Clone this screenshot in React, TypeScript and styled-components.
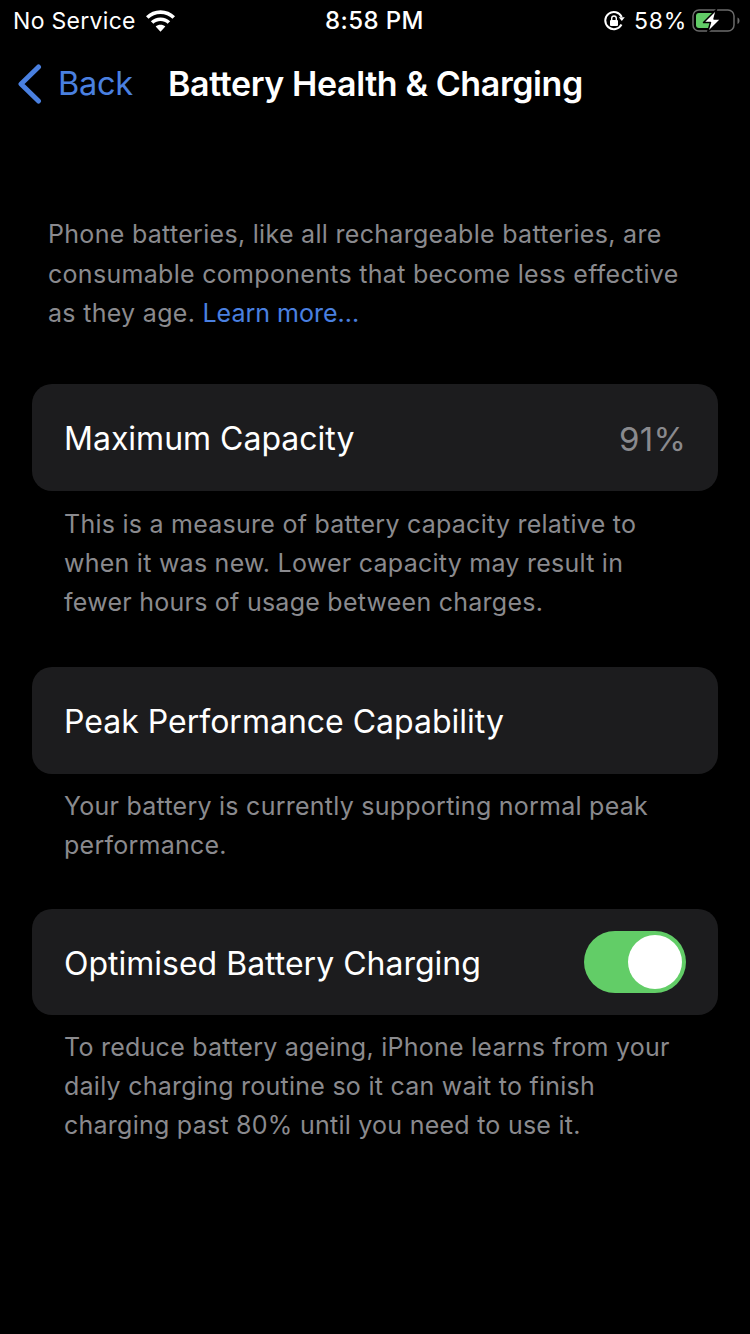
import styled, { createGlobalStyle } from "styled-components"

const GlobalStyle = createGlobalStyle`
html, body {
  margin: 0;
  padding: 0;
  background: #000;
}
`

const App = () => {
  return (
    <>
      <GlobalStyle />
      <Screen>
        <StatusBar>
          <StatusSide>
            <StatusText>No Service</StatusText>
            <WifiIcon />
          </StatusSide>
          <Clock>8:58 PM</Clock>
          <StatusRight>
            <RotationIcon />
            <BatteryPercent>58%</BatteryPercent>
            <BatteryIcon />
          </StatusRight>
        </StatusBar>

        <NavBar>
          <BackLink>
            <ChevronIcon />
            Back
          </BackLink>
          <Title>Battery Health &amp; Charging</Title>
        </NavBar>

        <Intro>
          Phone batteries, like all rechargeable batteries, are
          <br />
          consumable components that become less effective
          <br />
          as they age. <Learn>Learn more...</Learn>
        </Intro>

        <Card>
          <CardLabel>Maximum Capacity</CardLabel>
          <CardValue>91%</CardValue>
        </Card>
        <Footer $before={14} $after={45}>
          This is a measure of battery capacity relative to
          <br />
          when it was new. Lower capacity may result in
          <br />
          fewer hours of usage between charges.
        </Footer>

        <Card>
          <CardLabel>Peak Performance Capability</CardLabel>
        </Card>
        <Footer $before={13} $after={44}>
          Your battery is currently supporting normal peak
          <br />
          performance.
        </Footer>

        <Card $height={106}>
          <CardLabel>Optimised Battery Charging</CardLabel>
          <Toggle>
            <Knob />
          </Toggle>
        </Card>
        <Footer $before={13} $after={44}>
          To reduce battery ageing, iPhone learns from your
          <br />
          daily charging routine so it can wait to finish
          <br />
          charging past 80% until you need to use it.
        </Footer>
      </Screen>
    </>
  )
}

export default App

const WifiIcon = () => (
  <svg width="29" height="22" viewBox="1.800 .8 26.400 19.400">
    <path d="M15 4.200c4.200 0 8 1.600 10.900 4.300l2.300-2.400C24.700 2.800 20.100.8 15 .8S5.300 2.800 1.800 6.100l2.300 2.400C7 5.800 10.800 4.200 15 4.200z" fill="#fff" />
    <path d="M15 10.600c2.500 0 4.700.9 6.500 2.500l2.300-2.400C21.500 8.500 18.400 7.200 15 7.200s-6.500 1.300-8.800 3.500l2.300 2.400c1.800-1.600 4-2.500 6.500-2.500z" fill="#fff" />
    <path d="M15 13.800c-1.700 0-3.200.6-4.400 1.700L15 20.200l4.400-4.700c-1.200-1.100-2.700-1.700-4.400-1.700z" fill="#fff" />
  </svg>
)

const ChevronIcon = () => (
  <svg width="26" height="40" viewBox="0 0 26 40">
    <path d="M20.500 3L3 20l17.500 17" fill="none" stroke="#4a80e0" strokeWidth="5" strokeLinecap="round" strokeLinejoin="round" />
  </svg>
)

const RotationIcon = () => (
  <svg width="22" height="22" viewBox="0 0 22 22">
    <path d="M18.500 14.500A8.600 8.600 0 1 1 18.700 7" fill="none" stroke="#fff" strokeWidth="2" />
    <path d="M15.800 7.200h6l-3 3.800z" fill="#fff" />
    <rect x="7" y="10" width="8" height="6" rx="1" fill="#fff" />
    <path d="M8.700 10V8.300a2.300 2.300 0 0 1 4.600 0V10" fill="none" stroke="#fff" strokeWidth="1.400" />
  </svg>
)

const BatteryIcon = () => (
  <svg width="49" height="26" viewBox="0 0 49 26">
    <rect x="1" y="2" width="41" height="21" rx="6" fill="none" stroke="#6b6b6b" strokeWidth="1.500" />
    <path d="M4 8a3 3 0 0 1 3-3h14v15H7a3 3 0 0 1-3-3z" fill="#62cd67" />
    <path d="M45.500 9.500c1.300.5 2 1.700 2 3.200s-.7 2.700-2 3.200z" fill="#6b6b6b" />
    <path d="M24.500 1.500L11.500 14.500h7L15.500 24.500l13.500-13.500h-7z" fill="#fff" stroke="#000" strokeWidth="1.500" strokeLinejoin="round" />
  </svg>
)

const Screen = styled.div`
width: 750px;
min-height: 1334px;
background: #000;
color: #fff;
font-family: Inter, "Liberation Sans", sans-serif;
overflow: hidden;
`

const StatusBar = styled.div`
height: 41px;
padding: 0 9px 0 13px;
display: grid;
grid-template-columns: 1fr auto 1fr;
align-items: center;
`

const StatusSide = styled.div`
display: flex;
align-items: center;
gap: 10px;
`

const StatusRight = styled(StatusSide)`
justify-content: flex-end;
gap: 7px;
`

const StatusText = styled.span`
font-size: 23px;
letter-spacing: 0.3px;
`

const BatteryPercent = styled(StatusText)`
margin: 0 -2px 0 2px;
letter-spacing: 0.7px;
`

const Clock = styled.span`
margin-right: 5px;
font-size: 24px;
font-weight: 500;
letter-spacing: 0.4px;
`

const NavBar = styled.div`
height: 88px;
padding: 0 0 3px 18px;
box-sizing: border-box;
display: flex;
align-items: center;
`

const BackLink = styled.div`
display: flex;
align-items: center;
gap: 14px;
width: 150px;
color: #4a80e0;
font-size: 32.500px;
letter-spacing: -0.3px;
`

const Title = styled.h1`
margin: 0;
font-size: 34px;
font-weight: 600;
letter-spacing: -0.4px;
`

const Intro = styled.p`
margin: 0 0 50px;
padding: 86px 48px 0;
font-size: 25px;
line-height: 39.500px;
letter-spacing: 0.3px;
color: #8a8a8e;
`

const Learn = styled.span`
color: #4a80e0;
letter-spacing: 0;
`

const Card = styled.div<{ $height?: number }>`
height: ${(p) => p.$height ?? 107}px;
margin: 0 32px;
padding: 0 32px;
box-sizing: border-box;
display: flex;
align-items: center;
justify-content: space-between;
background: #1c1c1e;
border-radius: 20px;
`

const CardLabel = styled.span`
padding-top: 3px;
font-size: 32px;
`

const CardValue = styled(CardLabel)`
font-size: 33px;
letter-spacing: 0.2px;
color: #8a8a8e;
`

const Footer = styled.p<{ $before: number; $after: number }>`
margin: 0 0 ${(p) => p.$after}px;
padding: ${(p) => p.$before}px 64px 0;
font-size: 25px;
line-height: 39px;
letter-spacing: 0.25px;
color: #8a8a8e;
`

const Toggle = styled.div`
width: 102px;
height: 62px;
padding: 4px;
box-sizing: border-box;
display: flex;
justify-content: flex-end;
background: #62cd67;
border-radius: 31px;
`

const Knob = styled.div`
width: 54px;
height: 54px;
background: #fff;
border-radius: 50%;
`
